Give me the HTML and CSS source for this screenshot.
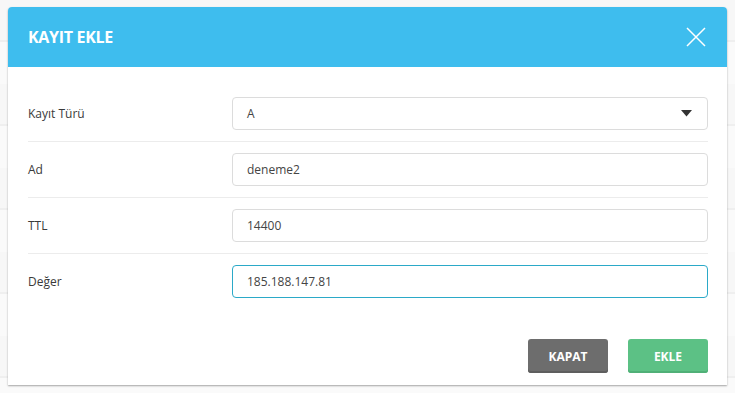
FILE: index.html
```html
<!DOCTYPE html>
<html lang="tr">
<head>
<meta charset="utf-8">
<title>Kayıt Ekle</title>
<link rel="stylesheet" href="styles.css">
</head>
<body>
<div class="backdrop">
  <div class="modal">
    <div class="modal-header">
      <h2 class="modal-title">KAYIT EKLE</h2>
      <button class="close" type="button" aria-label="Kapat">
        <svg width="20" height="20" viewBox="0 0 20 20"><path d="M1 1 L19 19 M19 1 L1 19" stroke="#fff" stroke-width="1.5" fill="none"/></svg>
      </button>
    </div>
    <div class="modal-body">
      <div class="row">
        <label class="label">Kayıt Türü</label>
        <div class="field select">
          <span>A</span>
          <svg class="caret" width="11" height="7" viewBox="0 0 11 7"><path d="M0 0 H11 L5.5 6.5 Z" fill="#333"/></svg>
        </div>
      </div>
      <div class="row">
        <label class="label">Ad</label>
        <div class="field">deneme2</div>
      </div>
      <div class="row">
        <label class="label">TTL</label>
        <div class="field">14400</div>
      </div>
      <div class="row">
        <label class="label">Değer</label>
        <div class="field focus">185.188.147.81</div>
      </div>
    </div>
    <div class="modal-footer">
      <button class="btn btn-gray" type="button">KAPAT</button>
      <button class="btn btn-green" type="button">EKLE</button>
    </div>
  </div>
</div>
</body>
</html>
```

FILE: styles.css
```css
html, body {
  margin: 0;
  padding: 0;
}
body {
  width: 735px;
  height: 393px;
  overflow: hidden;
  font-family: "Open Sans", "Liberation Sans", sans-serif;
  color: #333;
  background-color: #f7f7f7;
  background-image: repeating-linear-gradient(180deg, #f7f7f7 0, #f7f7f7 40px, #efefef 40px, #efefef 42px, #fafafa 42px, #fafafa 84px);
}
.backdrop {
  padding: 7px 8px 0 8px;
}
.modal {
  background: #fff;
  border-radius: 4px 4px 0 0;
  box-shadow: 0 1px 2px rgba(0,0,0,0.35);
  height: 378px;
  display: flex;
  flex-direction: column;
}
.modal-header {
  height: 60px;
  background: #3ebdee;
  border-radius: 4px 4px 0 0;
  display: flex;
  align-items: center;
  justify-content: space-between;
  padding: 0 21px 0 20px;
}
.modal-title {
  margin: 0;
  color: #fff;
  font-size: 16px;
  font-weight: 700;
  letter-spacing: -0.3px;
}
.close {
  background: none;
  border: 0;
  padding: 0;
  width: 20px;
  height: 20px;
  display: flex;
  cursor: pointer;
}
.modal-body {
  padding: 19px 19px 0 20px;
}
.row {
  display: flex;
  align-items: center;
  padding: 11px 0;
  border-bottom: 1px solid #ececec;
}
.row:last-child {
  border-bottom: 0;
}
.label {
  width: 204px;
  font-size: 12px;
  color: #3a3a3a;
}
.field {
  flex: 1;
  height: 33px;
  box-sizing: border-box;
  border: 1px solid #dcdcdc;
  border-radius: 4px;
  padding: 0 14px;
  display: flex;
  align-items: center;
  font-size: 12px;
  color: #444;
}
.select {
  justify-content: space-between;
  padding-right: 15px;
}
.caret {
  display: block;
}
.focus {
  border-color: #2ba9c8;
}
.modal-footer {
  display: flex;
  justify-content: flex-end;
  gap: 20px;
  padding: 30px 19px 0 20px;
}
.btn {
  width: 80px;
  height: 34px;
  border: 0;
  border-radius: 3px;
  color: #fff;
  font-family: "Open Sans", "Liberation Sans", sans-serif;
  font-size: 12px;
  font-weight: 700;
  cursor: pointer;
}
.btn-gray {
  background: #6d6d6d;
  box-shadow: inset 0 -2px 0 #5e5e5e;
}
.btn-green {
  background: #5cc185;
  box-shadow: inset 0 -2px 0 #50b077;
}
```
